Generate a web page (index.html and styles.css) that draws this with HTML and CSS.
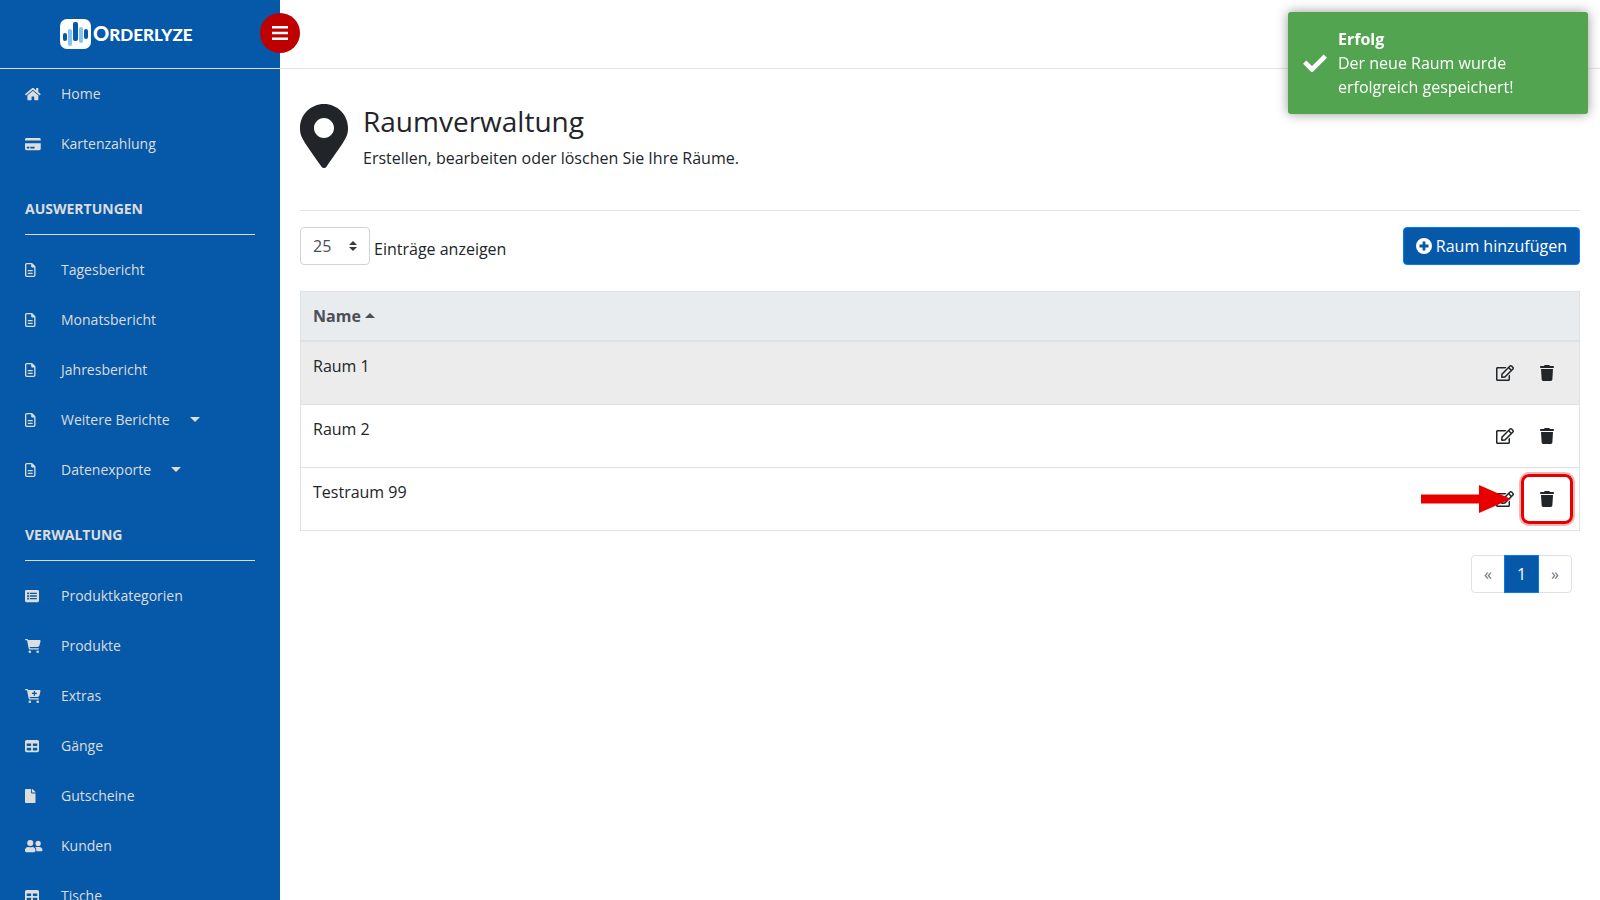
FILE: index.html
```html
<!DOCTYPE html>
<html lang="de">
<head>
<meta charset="utf-8">
<title>Raumverwaltung – Orderlyze</title>
<link rel="stylesheet" href="styles.css">
</head>
<body>
<svg class="sprite" aria-hidden="true">
  <symbol id="i-file" viewBox="0 0 384 512" preserveAspectRatio="xMinYMid"><path fill-rule="evenodd" d="M64 0h170c17 0 33 7 45 19l86 86c12 12 19 28 19 45v298c0 35-29 64-64 64H64c-35 0-64-29-64-64V64C0 29 29 0 64 0zm0 48c-9 0-16 7-16 16v384c0 9 7 16 16 16h256c9 0 16-7 16-16V160h-80c-18 0-32-14-32-32V48zm56 208h144c13 0 24 11 24 24s-11 24-24 24H120c-13 0-24-11-24-24s11-24 24-24zm0 96h144c13 0 24 11 24 24s-11 24-24 24H120c-13 0-24-11-24-24s11-24 24-24z"/></symbol>
  <symbol id="i-table" viewBox="0 0 512 512" preserveAspectRatio="xMinYMid"><path fill-rule="evenodd" d="M64 32h384c35 0 64 29 64 64v320c0 35-29 64-64 64H64c-35 0-64-29-64-64V96c0-35 29-64 64-64zm0 128v96h160v-96zm224 0v96h160v-96zM64 320v96h160v-96zm224 0v96h160v-96z"/></symbol>
  <symbol id="i-cart" viewBox="0 0 576 512" preserveAspectRatio="xMinYMid"><path d="M0 24C0 11 11 0 24 0h46c22 0 41 13 50 32h411c26 0 45 25 38 50l-41 152c-9 32-38 54-71 54H171l5 29c2 11 12 19 24 19h288c13 0 24 11 24 24s-11 24-24 24H200c-35 0-65-25-71-59L77 54c-1-3-4-6-7-6H24C11 48 0 37 0 24z"/><circle cx="176" cy="464" r="48"/><circle cx="464" cy="464" r="48"/></symbol>
  <symbol id="i-edit" viewBox="0 0 576 512"><path d="M402.3 344.9l32-32c5-5 13.700-1.500 13.700 5.700V464c0 26.500-21.500 48-48 48H48c-26.500 0-48-21.500-48-48V112c0-26.500 21.500-48 48-48h273.500c7.100 0 10.700 8.600 5.700 13.700l-32 32c-1.500 1.500-3.500 2.300-5.700 2.300H48v352h352V350.500c0-2.100.8-4.100 2.300-5.600zm156.600-201.800L296.300 405.700l-90.400 10c-26.200 2.900-48.500-19.200-45.600-45.600l10-90.400L432.900 17.100c22.900-22.900 59.900-22.900 82.700 0l43.200 43.200c22.900 22.900 22.900 60 .1 82.800zM460.100 174L402 115.900 216.200 301.800l-7.300 65.300 65.300-7.300L460.100 174zm64.800-79.700l-43.200-43.200c-4.100-4.100-10.800-4.100-14.800 0L436 82l58.100 58.100 30.900-30.900c4-4.200 4-10.800-.1-14.900z"/></symbol>
  <symbol id="i-trash" viewBox="0 0 448 512"><path d="M135 18 128 32H32C14 32 0 46 0 64s14 32 32 32h384c18 0 32-14 32-32s-14-32-32-32h-96l-7-14C307 7 296 0 284 0H164c-12 0-23 7-29 18zM416 128H32l21 339c2 25 23 45 48 45h246c25 0 46-20 48-45z"/></symbol>
</svg>

<div class="app">
  <aside class="sidebar">
    <div class="brand">
      <a class="logo" href="#">
        <svg class="logo-mark" viewBox="0 0 31 30" aria-hidden="true">
          <rect width="31" height="30" rx="7" fill="#fff"/>
          <rect x="3" y="14" width="4" height="8" rx="2" fill="#0658a9"/>
          <rect x="8" y="10" width="4" height="17" rx="2" fill="#85c3f0"/>
          <rect x="13" y="3" width="5" height="19" rx="2" fill="#0658a9"/>
          <rect x="19" y="8" width="4" height="16" rx="2" fill="#85c3f0"/>
          <rect x="24" y="10" width="4" height="10" rx="2" fill="#0658a9"/>
        </svg>
        <span class="logo-text">Orderlyze</span>
      </a>
      <button class="toggle" type="button" aria-label="Menü">
        <svg viewBox="0 0 16 14" aria-hidden="true"><path d="M0 0h16v2.400H0zM0 5.800h16v2.400H0zM0 11.600h16v2.400H0z"/></svg>
      </button>
    </div>
    <nav>
      <a class="item" href="#"><span class="ico"><svg viewBox="0 0 576 512" preserveAspectRatio="xMinYMid"><path d="M488 312.700V456c0 13.300-10.700 24-24 24H348c-6.600 0-12-5.400-12-12V356c0-6.600-5.400-12-12-12h-72c-6.600 0-12 5.400-12 12v112c0 6.600-5.400 12-12 12H112c-13.300 0-24-10.700-24-24V312.700c0-3.600 1.600-7 4.400-9.300l188-154.800c4.400-3.600 10.800-3.600 15.300 0l188 154.800c2.700 2.300 4.300 5.700 4.300 9.300zm83.600-60.900L488 182.900V44.400c0-6.600-5.400-12-12-12h-56c-6.600 0-12 5.400-12 12V117l-89.500-73.700c-17.700-14.600-43.300-14.600-61 0L4.400 251.800c-5.100 4.200-5.800 11.800-1.600 16.900l25.500 31c4.200 5.100 11.800 5.800 16.900 1.600l235.200-193.700c4.400-3.600 10.800-3.600 15.300 0l235.200 193.700c5.100 4.200 12.700 3.500 16.900-1.600l25.500-31c4.200-5.200 3.400-12.700-1.700-16.900z"/></svg></span>Home</a>
      <a class="item" href="#"><span class="ico"><svg viewBox="0 0 576 512" preserveAspectRatio="xMinYMid"><path fill-rule="evenodd" d="M0 86c0-30 24-54 54-54h468c30 0 54 24 54 54v42H0zm0 138h576v202c0 30-24 54-54 54H54c-30 0-54-24-54-54zm76 128c-7 0-12 5-12 12v40c0 7 5 12 12 12h72c7 0 12-5 12-12v-40c0-7-5-12-12-12zm128 0c-7 0-12 5-12 12v40c0 7 5 12 12 12h136c7 0 12-5 12-12v-40c0-7-5-12-12-12z"/></svg></span>Kartenzahlung</a>
      <h2 class="section">AUSWERTUNGEN</h2>
      <a class="item" href="#"><span class="ico"><svg><use href="#i-file"/></svg></span>Tagesbericht</a>
      <a class="item" href="#"><span class="ico"><svg><use href="#i-file"/></svg></span>Monatsbericht</a>
      <a class="item" href="#"><span class="ico"><svg><use href="#i-file"/></svg></span>Jahresbericht</a>
      <a class="item" href="#"><span class="ico"><svg><use href="#i-file"/></svg></span>Weitere Berichte<span class="caret"></span></a>
      <a class="item" href="#"><span class="ico"><svg><use href="#i-file"/></svg></span>Datenexporte<span class="caret"></span></a>
      <h2 class="section">VERWALTUNG</h2>
      <a class="item" href="#"><span class="ico"><svg viewBox="0 0 512 512" preserveAspectRatio="xMinYMid"><path fill-rule="evenodd" d="M48 32h416c26 0 48 22 48 48v352c0 26-22 48-48 48H48c-26 0-48-22-48-48V80c0-26 22-48 48-48zm32 96v64h64v-64zm96 8v48h256v-48zM80 224v64h64v-64zm96 8v48h256v-48zM80 320v64h64v-64zm96 8v48h256v-48z"/></svg></span>Produktkategorien</a>
      <a class="item" href="#"><span class="ico"><svg><use href="#i-cart"/></svg></span>Produkte</a>
      <a class="item" href="#"><span class="ico"><svg viewBox="0 0 576 512" preserveAspectRatio="xMinYMid"><use href="#i-cart" width="576" height="512"/><path fill="#0658a9" d="M320 72h48v64h64v48h-64v64h-48v-64h-64v-48h64z"/></svg></span>Extras</a>
      <a class="item" href="#"><span class="ico"><svg><use href="#i-table"/></svg></span>Gänge</a>
      <a class="item" href="#"><span class="ico"><svg viewBox="0 0 384 512" preserveAspectRatio="xMinYMid"><path d="M224 136V0H24C11 0 0 11 0 24v464c0 13 11 24 24 24h336c13 0 24-11 24-24V160H248c-13 0-24-11-24-24zm160-14v6H256V0h6c6 0 13 3 17 7l98 98c4 4 7 11 7 17z"/></svg></span>Gutscheine</a>
      <a class="item" href="#"><span class="ico"><svg viewBox="0 0 640 512" preserveAspectRatio="xMinYMid"><circle cx="192" cy="144" r="112"/><path d="M269 288h-8a161 161 0 0 1-138 0h-8C51 288 0 339 0 403v29c0 26 22 48 48 48h288c26 0 48-22 48-48v-29c0-64-51-115-115-115z"/><circle cx="480" cy="160" r="96"/><path d="M528 288h-4a128 128 0 0 1-88 0h-4c-20 0-39 6-55 16 24 26 39 60 39 99v45h176c26 0 48-22 48-48 0-62-50-112-112-112z"/></svg></span>Kunden</a>
      <a class="item" href="#"><span class="ico"><svg><use href="#i-table"/></svg></span>Tische</a>
    </nav>
  </aside>

  <div class="page">
    <header class="topbar"></header>
    <main class="content">
      <div class="heading">
        <svg class="pin" viewBox="0 0 384 512" aria-hidden="true"><path fill-rule="evenodd" d="M172.300 501.700C27 291 0 269.400 0 192 0 86 86 0 192 0s192 86 192 192c0 77.400-27 99-172.300 309.700-9.500 13.800-29.900 13.800-39.400 0zM192 272c44.200 0 80-35.800 80-80s-35.800-80-80-80-80 35.800-80 80 35.800 80 80 80z"/></svg>
        <div>
          <h1>Raumverwaltung</h1>
          <p>Erstellen, bearbeiten oder löschen Sie Ihre Räume.</p>
        </div>
      </div>
      <div class="tools">
        <div class="length">
          <select id="length"><option>25</option></select>
          <label for="length">Einträge anzeigen</label>
        </div>
        <button class="btn primary" type="button"><svg viewBox="0 0 16 16" aria-hidden="true"><path fill-rule="evenodd" d="M8 0a8 8 0 1 0 0 16A8 8 0 0 0 8 0zM6.600 3.500h2.800v3.100h3.100v2.800H9.400v3.100H6.600V9.400H3.500V6.600h3.100z"/></svg>Raum hinzufügen</button>
      </div>
      <table class="rooms">
        <thead><tr><th colspan="2">Name<span class="sort"></span></th></tr></thead>
        <tbody>
          <tr><td>Raum 1</td><td class="actions"><div class="pair"><button type="button" class="btn" aria-label="Bearbeiten"><svg class="edit"><use href="#i-edit"/></svg></button><button type="button" class="btn" aria-label="Löschen"><svg class="trash"><use href="#i-trash"/></svg></button></div></td></tr>
          <tr><td>Raum 2</td><td class="actions"><div class="pair"><button type="button" class="btn" aria-label="Bearbeiten"><svg class="edit"><use href="#i-edit"/></svg></button><button type="button" class="btn" aria-label="Löschen"><svg class="trash"><use href="#i-trash"/></svg></button></div></td></tr>
          <tr><td>Testraum 99</td><td class="actions"><div class="pair"><button type="button" class="btn" aria-label="Bearbeiten"><svg class="edit"><use href="#i-edit"/></svg></button><button type="button" class="btn" aria-label="Löschen"><svg class="trash"><use href="#i-trash"/></svg></button><span class="marker"></span><svg class="arrow" viewBox="0 0 90 28" aria-hidden="true"><path d="M0 9.500h58V0l32 14-32 14v-9.500H0z"/></svg></div></td></tr>
        </tbody>
      </table>
      <nav class="pages" aria-label="Seiten">
        <a href="#">«</a><a class="current" href="#">1</a><a href="#">»</a>
      </nav>
    </main>
  </div>
</div>

<div class="toast" role="status">
  <svg viewBox="0 0 24 18" aria-hidden="true"><path d="M1.700 8.200l7.300 7.300L22.300 2.200" fill="none" stroke="#fff" stroke-width="4.600"/></svg>
  <div><strong>Erfolg</strong><p>Der neue Raum wurde erfolgreich gespeichert!</p></div>
</div>
</body>
</html>
```
FILE: styles.css
```css
* { box-sizing: border-box; }

body {
  margin: 0;
  font: 16px/24px "Open Sans", sans-serif;
  color: #212529;
  background: #fff;
}

h1, h2, p { margin: 0; font-weight: 400; }
a { text-decoration: none; color: inherit; }
svg { fill: currentColor; }
.sprite { position: absolute; width: 0; height: 0; }

.app { display: flex; height: 100vh; overflow: hidden; }

.sidebar {
  flex: none;
  width: 280px;
  background: #0658a9;
  color: #ddd;
  font-size: 14px;
  line-height: 21px;
}

.brand {
  position: relative;
  display: flex;
  align-items: center;
  height: 69px;
  padding-left: 60px;
  border-bottom: 1px solid #ddd;
}
.logo { display: flex; align-items: center; gap: 2px; color: #fff; }
.logo-mark { width: 31px; height: 30px; }
.logo-text { font: 900 17px/24px Lato, sans-serif; text-transform: uppercase; }
.logo-text::first-letter { font-size: 20px; }
.logo-text { display: block; }

.toggle {
  position: absolute;
  top: 13px;
  right: -20px;
  display: grid;
  place-items: center;
  width: 40px;
  height: 40px;
  padding: 0;
  border: 0;
  border-radius: 50%;
  background: #bf0000;
  color: #fff;
}
.toggle svg { width: 16px; height: 14px; }

.item { display: flex; align-items: center; height: 50px; padding: 0 25px 2px; }
.ico { flex: none; display: flex; width: 36px; padding-top: 2px; }
.ico svg { height: 14px; width: 18px; }
.caret, .sort {
  border: 5px solid transparent;
  border-top-color: currentColor;
  border-bottom: 0;
}
.caret { margin-left: 20px; }

.section {
  margin: 0 25px 10px;
  padding: 29px 0 15px;
  border-bottom: 1px solid #ddd;
  font-size: 14px;
  line-height: 21px;
  font-weight: 700;
}

.page { flex: 1; min-width: 0; }
.topbar { height: 69px; border-bottom: 1px solid #e9dfe1; }
.content { padding: 35px 20px; }

.heading {
  display: flex;
  gap: 15px;
  padding-bottom: 40px;
  border-bottom: 1px solid #e3e3e3;
}
.pin { width: 48px; height: 64px; }
.heading h1 { font-size: 28px; line-height: 34px; margin-bottom: 8px; }

.tools {
  display: flex;
  justify-content: space-between;
  align-items: flex-start;
  padding: 16px 0 26px;
}
.length { display: flex; gap: 4px; align-items: center; }
.length label { padding-top: 6px; }
.length select {
  appearance: none;
  width: 70px;
  height: 38px;
  padding: 0 12px;
  border: 1px solid #ced4da;
  border-radius: 4px;
  color: #495057;
  font: inherit;
  background: #fff url("data:image/svg+xml,%3csvg xmlns='http://www.w3.org/2000/svg' viewBox='0 0 4 5'%3e%3cpath fill='%23343a40' d='M2 0L0 2h4zm0 5L0 3h4z'/%3e%3c/svg%3e") no-repeat right 12px center / 8px 10px;
}

.btn {
  display: inline-flex;
  align-items: center;
  gap: 4px;
  height: 38px;
  padding: 0 12px;
  border: 1px solid transparent;
  border-radius: 4px;
  background: none;
  color: inherit;
  font: inherit;
}
.btn svg { height: 16px; width: 16px; }
.btn .edit { width: 18px; }
.btn .trash { width: 14px; }
.primary { background: #0658a9; border-color: #007bff; color: #fff; }

.rooms { width: 100%; border-collapse: collapse; border: 1px solid #dee2e6; }
.rooms th {
  padding: 12px;
  text-align: left;
  background: #e9ecef;
  color: #495057;
  border-bottom: 2px solid #dee2e6;
}
.rooms td { padding: 12px; vertical-align: top; border-bottom: 1px solid #dee2e6; }
.rooms tbody tr:first-child { background: #ececec; }
.rooms .actions { width: 120px; }
.sort { display: inline-block; margin-left: 4px; vertical-align: 4px; border-top: 0; border-bottom: 5px solid currentColor; }
.pair { position: relative; display: flex; justify-content: flex-end; }

.marker {
  position: absolute;
  top: -6px;
  right: -6px;
  width: 52px;
  height: 50px;
  border: 3px solid #e60000;
  border-radius: 8px;
  box-shadow: 0 0 0 2px #f9b4b4;
}
.arrow { position: absolute; top: 5px; right: 56px; width: 90px; height: 28px; color: #e60000; }

.pages { display: flex; justify-content: flex-end; padding: 24px 8px; }
.pages a {
  padding: 6px 12px;
  border: 1px solid #dee2e6;
  color: #6c757d;
}
.pages a + a { margin-left: -1px; }
.pages a:first-child { border-radius: 4px 0 0 4px; }
.pages a:last-child { border-radius: 0 4px 4px 0; }
.pages .current { position: relative; background: #0658a9; border-color: #007bff; color: #fff; }

.toast {
  position: fixed;
  top: 12px;
  right: 12px;
  display: flex;
  align-items: center;
  gap: 11px;
  width: 300px;
  padding: 15px;
  border-radius: 3px;
  background: #53a451;
  box-shadow: 0 0 12px #999;
  color: #fff;
}
.toast svg { flex: none; width: 24px; height: 18px; }
.toast strong { display: block; }
```
